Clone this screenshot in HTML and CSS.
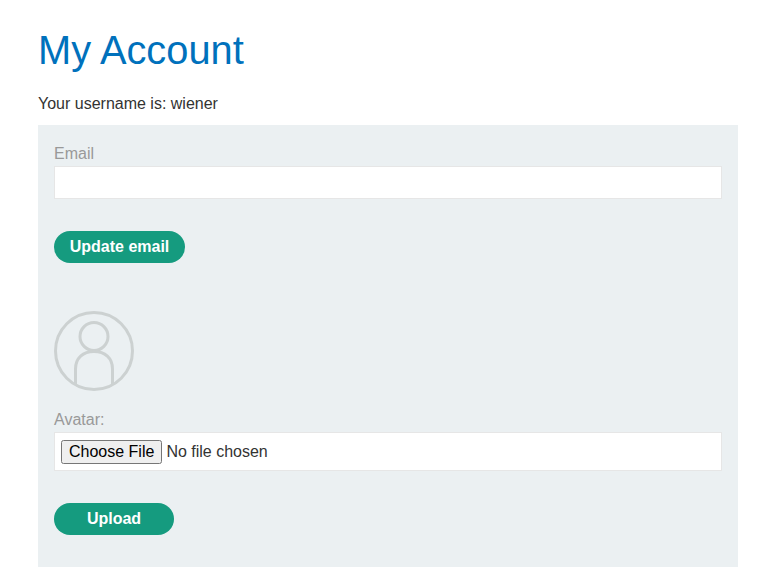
FILE: index.html
```html
<!DOCTYPE html>
<html>
<head>
<meta charset="utf-8">
<title>My Account</title>
<link rel="stylesheet" href="styles.css">
</head>
<body>
	<div class="container">
		<h1>My Account</h1>
		<p class="username">Your username is: wiener</p>
		<div class="panel">
			<form class="email-form">
				<label for="email">Email</label>
				<input id="email" type="email">
				<button class="button" type="button">Update email</button>
			</form>
			<form class="avatar-form">
				<svg class="avatar" width="80" height="80" viewBox="0 0 80 80" fill="none" stroke="#ccd1d1" stroke-width="3">
					<circle cx="40" cy="40" r="38.5"/>
					<circle cx="40" cy="25.500" r="14"/>
					<path d="M21.500 74V58C21.500 47 29 40.500 40 40.500S58.500 47 58.500 58V74"/>
				</svg>
				<label for="avatar">Avatar:</label>
				<div class="file-box">
					<input id="avatar" type="file">
				</div>
				<button class="button upload" type="button">Upload</button>
			</form>
		</div>
	</div>
</body>
</html>
```

FILE: styles.css
```css
* {
	box-sizing: border-box;
}
body {
	margin: 0;
	background: #fff;
	color: #333332;
	font-family: "Liberation Sans", Arial, sans-serif;
	font-size: 16px;
}
.container {
	width: 700px;
	margin: 0 0 0 38px;
}
h1 {
	margin: 0;
	padding-top: 27px;
	color: #0071bc;
	font-size: 39.8px;
	font-weight: 400;
	line-height: 46px;
}
.username {
	margin: 0;
	padding-top: 22px;
	line-height: 18px;
	height: 52px;
}
.panel {
	height: 442px;
	padding: 20px 16px 0;
	background: #ebf0f2;
}
label {
	display: block;
	color: #999;
	line-height: 18px;
}
#email {
	display: block;
	width: 100%;
	height: 33px;
	margin: 3px 0 32px;
	border: 1px solid #e6e6e6;
	background: #fff;
}
.button {
	display: block;
	width: 131px;
	height: 32px;
	padding: 0;
	border: 0;
	border-radius: 25px;
	background: #159b7f;
	color: #fff;
	font-family: inherit;
	font-size: 16px;
	font-weight: 700;
}
.upload {
	width: 120px;
}
.avatar-form {
	padding-top: 48px;
}
.avatar {
	display: block;
	margin-bottom: 20px;
}
.file-box {
	height: 39px;
	margin: 3px 0 32px;
	padding: 7px 6px;
	border: 1px solid #e6e6e6;
	background: #fff;
}
#avatar {
	font-family: inherit;
	font-size: 16px;
	color: #333332;
}
```
